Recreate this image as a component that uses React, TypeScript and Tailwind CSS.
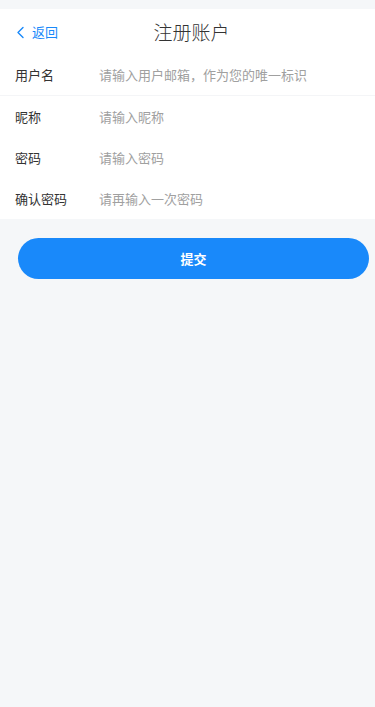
import { useState } from "react";

const fields = [
  { label: "用户名", placeholder: "请输入用户邮箱，作为您的唯一标识", type: "text" },
  { label: "昵称", placeholder: "请输入昵称", type: "text" },
  { label: "密码", placeholder: "请输入密码", type: "password" },
  { label: "确认密码", placeholder: "请再输入一次密码", type: "password" },
];

export default function App() {
  const [values, setValues] = useState<string[]>(["", "", "", ""]);

  return (
    <div
      className="min-h-[707px] bg-[#f5f7f9] pt-[9px]"
      style={{ fontFamily: '"Noto Sans CJK SC", "Noto Sans", sans-serif' }}
    >
      {/* Nav bar */}
      <div className="relative flex h-[46px] items-center justify-center bg-white">
        <button className="absolute left-[16px] top-0 flex h-full items-center gap-[7px] text-[13px] text-[#1989fa]">
          <svg width="9" height="13" viewBox="0 0 9 13" fill="none">
            <path d="M7 1.5L2 6.5L7 11.5" stroke="#1989fa" strokeWidth="1.4" strokeLinecap="round" strokeLinejoin="round" />
          </svg>
          <span>返回</span>
        </button>
        <span className="pl-[8px] text-[19px] font-light text-[#333333]">注册账户</span>
      </div>

      {/* Fields */}
      <div className="bg-white">
        {fields.map((f, i) => (
          <div
            key={f.label}
            className={`flex h-[41px] items-center px-[15px] ${i === 0 ? "border-b border-[#f4f5f7]" : ""}`}
          >
            <label className="w-[84px] shrink-0 text-[13px] text-[#333333]">{f.label}</label>
            <input
              type={f.type}
              value={values[i]}
              placeholder={f.placeholder}
              onChange={(e) => {
                const next = [...values];
                next[i] = e.target.value;
                setValues(next);
              }}
              className="min-w-0 flex-1 bg-transparent text-[13px] text-[#333333] outline-none placeholder:text-[#a0a0a0]"
            />
          </div>
        ))}
      </div>

      {/* Submit */}
      <div className="pl-[18px] pr-[6px] pt-[19px]">
        <button className="flex h-[41px] w-full items-center justify-center rounded-full bg-[#1989fa] text-[13px] font-bold text-white">
          提交
        </button>
      </div>
    </div>
  );
}
